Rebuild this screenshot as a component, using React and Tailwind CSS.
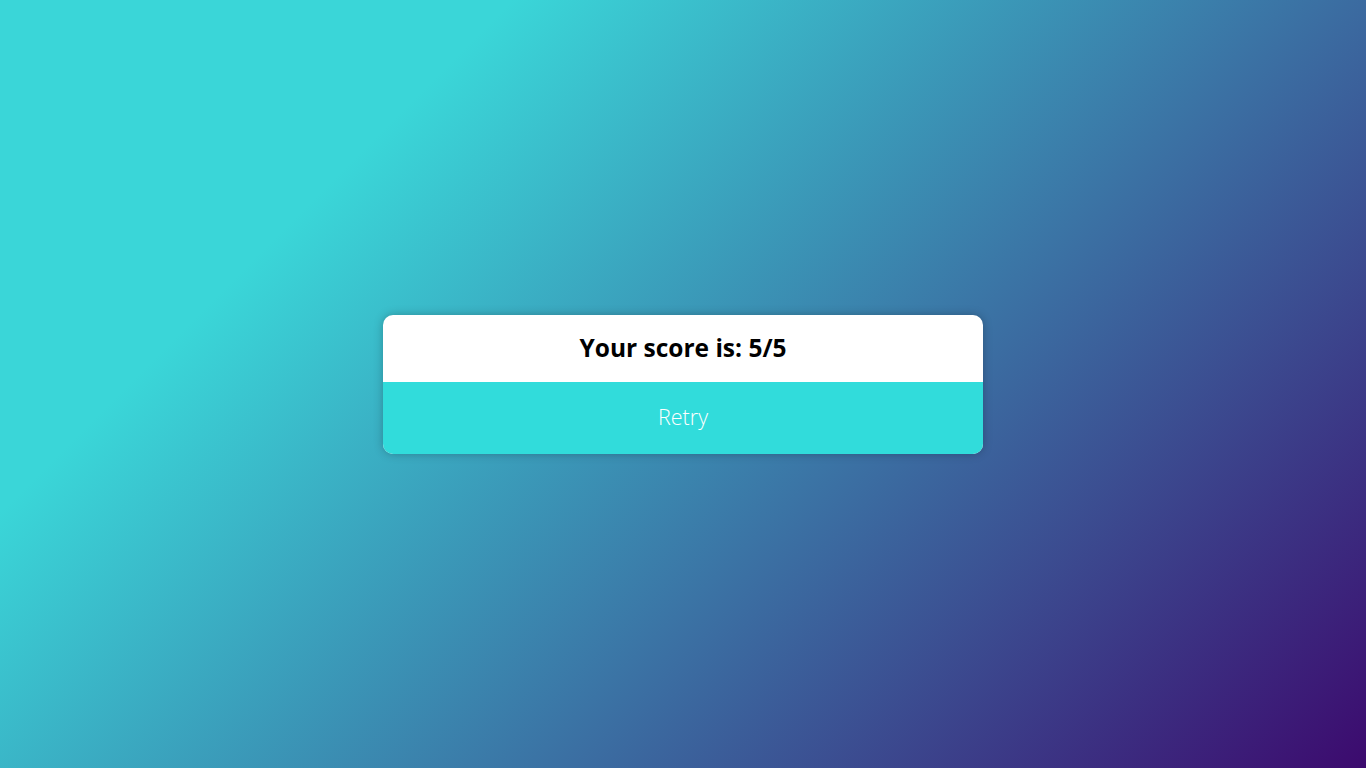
export default function App() {
  return (
    <div className="min-h-screen w-full flex items-center justify-center bg-[linear-gradient(135deg,#3ad6d8_24%,#3c0a6e_100%)]" style={{ fontFamily: '"Open Sans", "Liberation Sans", sans-serif' }}>
      <div className="w-[600px] rounded-[10px] overflow-hidden bg-white shadow-[0_0_10px_rgba(0,0,0,0.25)]">
        <div className="h-[67px] flex items-center justify-center">
          <h1 className="text-[24.5px] font-bold text-black leading-none">Your score is: 5/5</h1>
        </div>
        <button className="w-full h-[72px] bg-[#31dcdb] text-white text-[21.5px] font-light flex items-center justify-center">
          Retry
        </button>
      </div>
    </div>
  );
}
